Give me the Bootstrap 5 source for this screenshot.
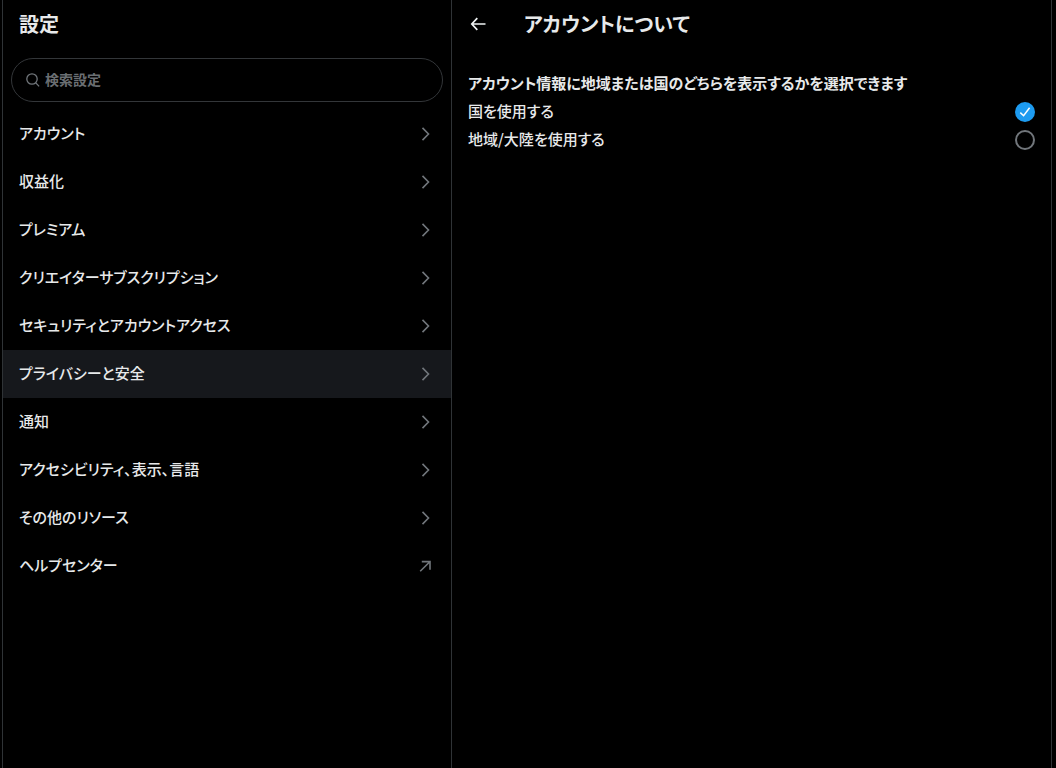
<!DOCTYPE html>
<html lang="ja">
<head>
<meta charset="utf-8">
<meta name="viewport" content="width=device-width, initial-scale=1">
<title>設定</title>
<link href="https://cdn.jsdelivr.net/npm/bootstrap@5.3.0/dist/css/bootstrap.min.css" rel="stylesheet">
<style>
  body {
    background: #000;
    color: #e7e9ea;
    font-family: "Noto Sans CJK JP", sans-serif;
    font-size: 15px;
    line-height: 20px;
    font-feature-settings: "palt";
  }
  .shell {
    display: grid;
    grid-template-columns: 3fr 4fr;
    margin: 0 4px 0 2px;
  }
  .pane { border-right: 1px solid #2f3336; }
  .pane-menu { border-left: 1px solid #2f3336; }
  .pane-head { height: 48px; padding: 0 16px; }
  .pane-title { font-size: 20px; line-height: 24px; }
  .search-box {
    height: 44px;
    margin: 10px 8px 8px;
    padding: 0 14px;
    border: 1px solid #333639;
  }
  .search-box svg { stroke-width: 1.3; }
  .search-box input {
    background: none;
    color: #e7e9ea;
    font-size: 14px;
    font-weight: 700;
    line-height: 20px;
    padding: 0 0 2px;
    outline: 0;
  }
  .search-box input::placeholder { color: #6a6e72; opacity: 1; }
  .menu-item {
    height: 48px;
    padding: 0 16px 2px;
    color: #e7e9ea;
    font-weight: 500;
  }
  .menu-item:hover, .menu-item.active { background: #16181c; color: #e7e9ea; }
  .glyph { fill: none; stroke: #71767b; stroke-width: 1.6; flex: none; }
  .back-btn { width: 20px; height: 20px; margin-right: 36px; }
  .options { padding: 25px 16px 0; }
  .options legend { font-size: 15px; line-height: 20px; margin-bottom: 5px; }
  .option-row { height: 28px; font-weight: 500; }
  .option-row label { padding-bottom: 2px; }
  .option-row .form-check-input {
    width: 20px;
    height: 20px;
    border: 2px solid #71767b;
    background-color: transparent;
    box-shadow: none;
  }
  .option-row .form-check-input:checked {
    border: 0;
    background-color: #1d9bf0;
    background-size: 20px;
    background-image: url("data:image/svg+xml,%3Csvg xmlns='http://www.w3.org/2000/svg' viewBox='0 0 20 20'%3E%3Cpath fill='none' stroke='%23fff' stroke-width='1.5' d='M5.3 10.6l3.3 3.1 6-7.9'/%3E%3C/svg%3E");
  }
</style>
</head>
<body>
<svg class="d-none" aria-hidden="true">
  <symbol id="chevron" viewBox="0 0 18 18"><path d="M5.500 3.900l6 6.100-6 6.100"/></symbol>
  <symbol id="outward" viewBox="0 0 18 18"><path d="M3.200 15.300L12.600 6M4.800 5.600H13v8.200"/></symbol>
</svg>
<div class="shell min-vh-100">
  <section class="pane pane-menu">
    <header class="pane-head d-flex align-items-center">
      <h1 class="pane-title fw-bold m-0">設定</h1>
    </header>
    <label class="search-box rounded-pill d-flex align-items-center">
      <svg class="glyph me-1" width="15" height="16" viewBox="0 0 15 16"><circle cx="6" cy="7" r="5.200"/><path d="M9.800 10.900l3.300 3.500"/></svg>
      <input type="text" class="border-0 flex-grow-1" placeholder="検索設定" aria-label="検索設定">
    </label>
    <nav class="d-flex flex-column" aria-label="設定">
      <a href="#" class="menu-item d-flex align-items-center justify-content-between text-decoration-none">アカウント<svg class="glyph" width="18" height="18"><use href="#chevron"/></svg></a>
      <a href="#" class="menu-item d-flex align-items-center justify-content-between text-decoration-none">収益化<svg class="glyph" width="18" height="18"><use href="#chevron"/></svg></a>
      <a href="#" class="menu-item d-flex align-items-center justify-content-between text-decoration-none">プレミアム<svg class="glyph" width="18" height="18"><use href="#chevron"/></svg></a>
      <a href="#" class="menu-item d-flex align-items-center justify-content-between text-decoration-none">クリエイターサブスクリプション<svg class="glyph" width="18" height="18"><use href="#chevron"/></svg></a>
      <a href="#" class="menu-item d-flex align-items-center justify-content-between text-decoration-none">セキュリティとアカウントアクセス<svg class="glyph" width="18" height="18"><use href="#chevron"/></svg></a>
      <a href="#" class="menu-item active d-flex align-items-center justify-content-between text-decoration-none" aria-current="page">プライバシーと安全<svg class="glyph" width="18" height="18"><use href="#chevron"/></svg></a>
      <a href="#" class="menu-item d-flex align-items-center justify-content-between text-decoration-none">通知<svg class="glyph" width="18" height="18"><use href="#chevron"/></svg></a>
      <a href="#" class="menu-item d-flex align-items-center justify-content-between text-decoration-none">アクセシビリティ、表示、言語<svg class="glyph" width="18" height="18"><use href="#chevron"/></svg></a>
      <a href="#" class="menu-item d-flex align-items-center justify-content-between text-decoration-none">その他のリソース<svg class="glyph" width="18" height="18"><use href="#chevron"/></svg></a>
      <a href="#" class="menu-item d-flex align-items-center justify-content-between text-decoration-none">ヘルプセンター<svg class="glyph" width="18" height="18"><use href="#outward"/></svg></a>
    </nav>
  </section>
  <main class="pane">
    <header class="pane-head d-flex align-items-center">
      <button type="button" class="back-btn btn p-0 border-0 d-flex" aria-label="戻る">
        <svg width="20" height="20" viewBox="0 0 20 20" fill="none" stroke="#eff3f4" stroke-width="1.700"><path d="M17.500 10H4M9.300 4.200L3.800 10l5.500 5.800"/></svg>
      </button>
      <h2 class="pane-title fw-bold m-0">アカウントについて</h2>
    </header>
    <fieldset class="options">
      <legend class="fw-bold">アカウント情報に地域または国のどちらを表示するかを選択できます</legend>
      <div class="option-row d-flex align-items-center justify-content-between">
        <label for="useCountry" class="flex-grow-1">国を使用する</label>
        <input class="form-check-input m-0" type="radio" name="place" id="useCountry" checked>
      </div>
      <div class="option-row d-flex align-items-center justify-content-between">
        <label for="useRegion" class="flex-grow-1">地域/大陸を使用する</label>
        <input class="form-check-input m-0" type="radio" name="place" id="useRegion">
      </div>
    </fieldset>
  </main>
</div>
<script src="https://cdn.jsdelivr.net/npm/bootstrap@5.3.0/dist/js/bootstrap.bundle.min.js"></script>
</body>
</html>
